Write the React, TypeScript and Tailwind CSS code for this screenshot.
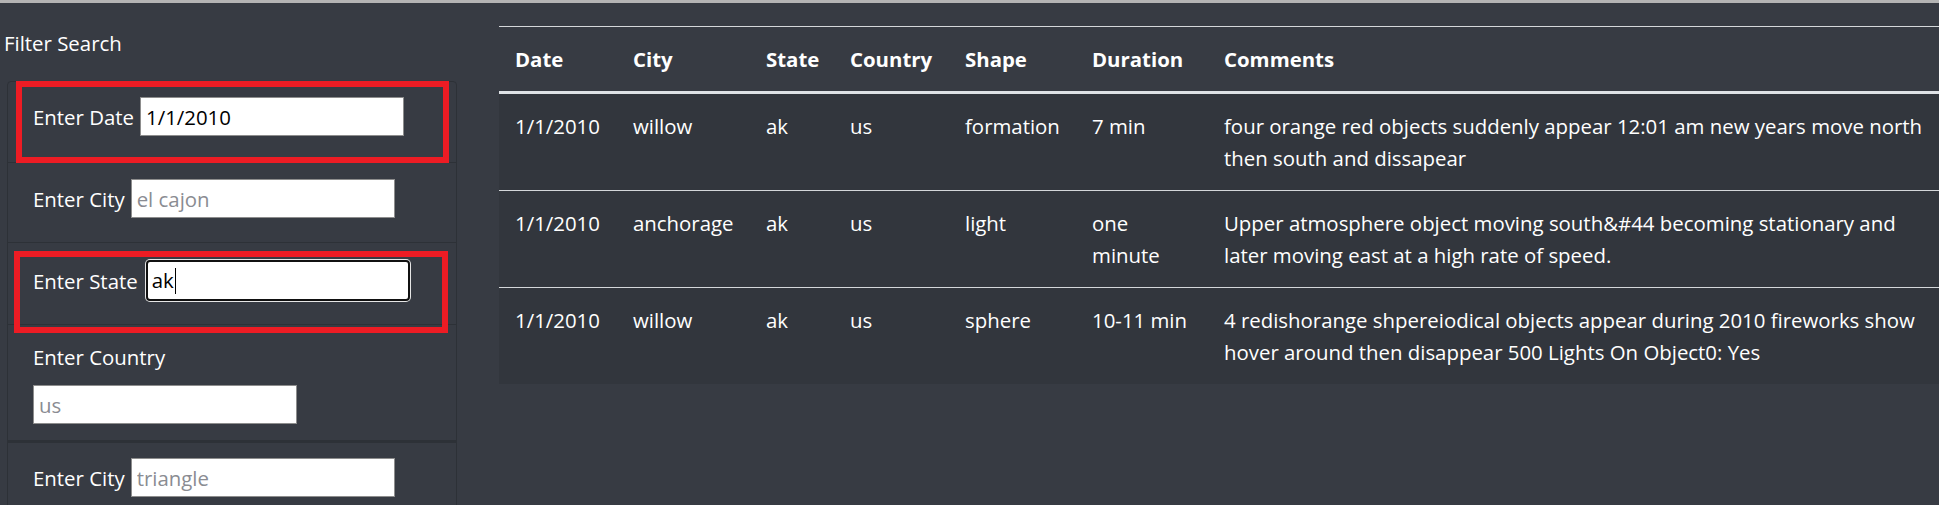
import React from "react";

const rows = [
  {
    date: "1/1/2010",
    city: "willow",
    state: "ak",
    country: "us",
    shape: "formation",
    duration: ["7 min"],
    comments: [
      "four orange red objects suddenly appear 12:01 am new years move north",
      "then south and dissapear",
    ],
  },
  {
    date: "1/1/2010",
    city: "anchorage",
    state: "ak",
    country: "us",
    shape: "light",
    duration: ["one", "minute"],
    comments: [
      "Upper atmosphere object moving south&#44 becoming stationary and",
      "later moving east at a high rate of speed.",
    ],
  },
  {
    date: "1/1/2010",
    city: "willow",
    state: "ak",
    country: "us",
    shape: "sphere",
    duration: ["10-11 min"],
    comments: [
      "4 redishorange shpereiodical objects appear during 2010 fireworks show",
      "hover around then disappear 500 Lights On Object0: Yes",
    ],
  },
];

const headers = ["Date", "City", "State", "Country", "Shape", "Duration", "Comments"];
const colWidths = [118, 133, 84, 115, 127, 132];

function TextInput({ value, placeholder }: { value?: string; placeholder?: string }) {
  return (
    <input
      readOnly
      defaultValue={value}
      placeholder={placeholder}
      className="h-[39px] w-[264px] shrink-0 border border-[#8d8d8d] bg-white px-[5px] text-[20.4px] text-black placeholder:text-[#8a8c92] outline-none font-['Open_Sans',sans-serif]"
    />
  );
}

export default function App() {
  return (
    <div className="h-[505px] overflow-hidden bg-[#373b43] text-white font-['Open_Sans',sans-serif] text-[20.4px]">
      <div className="h-[3px] bg-[#b4b4b4]" />
      <div className="flex">
        <aside className="relative w-[457px] shrink-0">
          <div className="pl-[4px] pt-[24px] leading-[32px]">Filter Search</div>
          <div className="ml-[7px] mt-[22px] rounded-t-[4px] border border-[#2d3137]">
            <div className="flex items-center gap-[6px] border-b border-[#2d3137] px-[25px] pt-[15px] pb-[26px]">
              <span className="leading-[32px]">Enter Date</span>
              <TextInput value="1/1/2010" />
            </div>
            <div className="flex items-center gap-[6px] border-b border-[#2d3137] px-[25px] pt-[16px] pb-[24px]">
              <span className="leading-[32px]">Enter City</span>
              <TextInput placeholder="el cajon" />
            </div>
            <div className="flex items-center gap-[8px] border-b border-[#2d3137] px-[25px] pt-[17px] pb-[23px]">
              <span className="leading-[32px]">Enter State</span>
              <div className="flex h-[41px] w-[264px] items-center rounded-[4px] border-2 border-[#111] bg-white px-[4px] text-black shadow-[0_0_0_1px_#e6e6e6]">
                <span>ak</span>
                <span className="ml-[1px] h-[26px] w-[1px] bg-black" />
              </div>
            </div>
            <div className="border-b-[3px] border-[#2d3137] px-[25px] pt-[16px] pb-[16px]">
              <div className="leading-[32px]">Enter Country</div>
              <div className="mt-[12px]">
                <TextInput placeholder="us" />
              </div>
            </div>
            <div className="flex items-center gap-[6px] px-[25px] pt-[15px] pb-[24px]">
              <span className="leading-[32px]">Enter City</span>
              <TextInput placeholder="triangle" />
            </div>
          </div>
          <div className="pointer-events-none absolute left-[16px] top-[78px] h-[82px] w-[433px] border-[6px] border-[#ed1c24]" />
          <div className="pointer-events-none absolute left-[14px] top-[248px] h-[82px] w-[434px] border-[6px] border-[#ed1c24]" />
        </aside>
        <main className="min-w-0 flex-1 pl-[42px] pt-[23px]">
          <table className="w-full table-fixed border-collapse">
            <colgroup>
              {colWidths.map((w, i) => (
                <col key={i} style={{ width: w }} />
              ))}
              <col />
            </colgroup>
            <thead>
              <tr>
                {headers.map((h) => (
                  <th
                    key={h}
                    className="border-t border-b-[3px] border-t-[#d4d7da] border-b-[#dee2e6] px-[16px] py-[16px] text-left align-top font-bold leading-[32px]"
                  >
                    {h}
                  </th>
                ))}
              </tr>
            </thead>
            <tbody className="bg-[#32363d]">
              {rows.map((r, i) => (
                <tr key={i} className="border-t border-[#d4d7da]">
                  <td className="px-[16px] py-[16px] align-top leading-[32px] whitespace-nowrap">{r.date}</td>
                  <td className="px-[16px] py-[16px] align-top leading-[32px] whitespace-nowrap">{r.city}</td>
                  <td className="px-[16px] py-[16px] align-top leading-[32px] whitespace-nowrap">{r.state}</td>
                  <td className="px-[16px] py-[16px] align-top leading-[32px] whitespace-nowrap">{r.country}</td>
                  <td className="px-[16px] py-[16px] align-top leading-[32px] whitespace-nowrap">{r.shape}</td>
                  <td className="px-[16px] py-[16px] align-top leading-[32px] whitespace-nowrap">
                    {r.duration.map((d, j) => (
                      <div key={j}>{d}</div>
                    ))}
                  </td>
                  <td className="px-[16px] py-[16px] align-top leading-[32px] whitespace-nowrap">
                    {r.comments.map((c, j) => (
                      <div key={j}>{c}</div>
                    ))}
                  </td>
                </tr>
              ))}
            </tbody>
          </table>
        </main>
      </div>
    </div>
  );
}
